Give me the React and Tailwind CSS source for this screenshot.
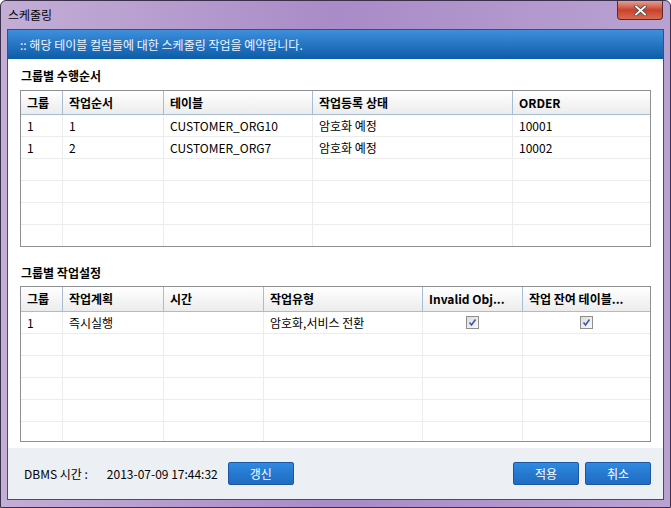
import { useState } from 'react';

const font = { fontFamily: '"Noto Sans CJK KR", "Noto Sans", sans-serif' };

const orderCols = ['w-[42px]', 'w-[101px]', 'w-[149px]', 'w-[200px]', 'flex-1'];
const orderHead = ['그룹', '작업순서', '테이블', '작업등록 상태', 'ORDER'];
const orderRows = [
    ['1', '1', 'CUSTOMER_ORG10', '암호화 예정', '10001'],
    ['1', '2', 'CUSTOMER_ORG7', '암호화 예정', '10002'],
];

const jobCols = ['w-[42px]', 'w-[101px]', 'w-[100px]', 'w-[159px]', 'w-[100px]', 'flex-1'];
const jobHead = ['그룹', '작업계획', '시간', '작업유형', 'Invalid Obj...', '작업 잔여 테이블...'];

function Check({ checked }) {
    return (
        <span className="flex h-[13px] w-[13px] items-center justify-center border border-[#8f8f8f] bg-gradient-to-br from-[#dcdcdc] to-[#fafafa]">
            {checked && (
                <svg width="9" height="9" viewBox="0 0 9 9">
                    <path d="M1.5 4.5 L3.5 7 L7.5 1.5" fill="none" stroke="#3b58a8" strokeWidth="1.6" />
                </svg>
            )}
        </span>
    );
}

function Grid({ cols, head, rows, height, headH }) {
    const empty = 6 - rows.length;
    return (
        <div className={`mx-[12px] ${height} overflow-hidden border border-[#8c8f94] bg-white`}>
            <div className={`flex ${headH} border-b border-[#a6bdd4] bg-gradient-to-b from-white to-[#ececec] text-[12px] font-bold text-black`}>
                {head.map((h, i) => (
                    <div key={i} className={`${cols[i]} flex items-center truncate px-[6px] ${i < head.length - 1 ? 'border-r border-[#a6bdd4]' : ''}`}>{h}</div>
                ))}
            </div>
            {rows.map((r, ri) => (
                <div key={ri} className="flex h-[22px] border-b border-[#ececec] text-[12px] text-black">
                    {r.map((c, i) => (
                        <div key={i} className={`${cols[i]} flex items-center px-[6px] ${i < r.length - 1 ? 'border-r border-[#ececec]' : ''} ${typeof c !== 'string' ? 'justify-center' : ''}`}>{c}</div>
                    ))}
                </div>
            ))}
            {Array.from({ length: empty }).map((_, ri) => (
                <div key={'e' + ri} className="flex h-[22px] border-b border-[#ececec]">
                    {cols.map((w, i) => (
                        <div key={i} className={`${w} ${i < cols.length - 1 ? 'border-r border-[#ececec]' : ''}`} />
                    ))}
                </div>
            ))}
        </div>
    );
}

function BlueButton({ children }) {
    return (
        <button className="h-[23px] w-[66px] rounded-[2px] border border-[#1c56a0] bg-gradient-to-b from-[#2f8ae2] via-[#2679d0] to-[#1f6cc0] text-[12px] text-white">
            {children}
        </button>
    );
}

export default function App() {
    const [time] = useState('2013-07-09 17:44:32');
    return (
        <div style={font} className="flex h-[508px] w-[671px] flex-col rounded-t-[6px] border border-[#3c2f4c] bg-gradient-to-r from-[#c3aed6] via-[#a98bc7] to-[#b9a2d2] px-[6px] pb-[7px]">
            {/* title bar */}
            <div className="flex h-[28px] items-start justify-between">
                <span className="pl-[1px] pt-[5px] text-[12px] text-black">스케줄링</span>
                <div className="mr-[1px] flex h-[19px] w-[46px] items-center justify-center rounded-b-[4px] border border-t-0 border-[#5a2a2a] bg-gradient-to-b from-[#e0a090] via-[#c8402c] to-[#d86a50]">
                    <svg width="13" height="11" viewBox="0 0 13 11">
                        <path d="M2 1.5 L11 9.5 M11 1.5 L2 9.5" stroke="#4a4a4a" strokeWidth="3.4" strokeLinecap="square" />
                        <path d="M2 1.5 L11 9.5 M11 1.5 L2 9.5" stroke="#ffffff" strokeWidth="1.8" strokeLinecap="square" />
                    </svg>
                </div>
            </div>

            {/* client area */}
            <div className="flex flex-1 flex-col border border-[#4d4a5a] bg-white">
                <div className="flex h-[29px] items-center bg-gradient-to-b from-[#3d8fdc] to-[#0b5ca8] pl-[12px] text-[12px] text-[#eef4ff]">
                    :: 해당 테이블 컬럼들에 대한 스케줄링 작업을 예약합니다.
                </div>

                <div className="mt-[8px] flex h-[18px] items-center pl-[13px] text-[12px] font-bold text-black">그룹별 수행순서</div>
                <div className="mt-[5px]">
                    <Grid cols={orderCols} head={orderHead} rows={orderRows} height="h-[157px]" headH="h-[24px]" />
                </div>

                <div className="mt-[17px] flex h-[18px] items-center pl-[13px] text-[12px] font-bold text-black">그룹별 작업설정</div>
                <div className="mt-[4px]">
                    <Grid
                        cols={jobCols}
                        head={jobHead}
                        rows={[['1', '즉시실행', '', '암호화,서비스 전환', <Check checked />, <Check checked />]]}
                        height="h-[156px]"
                        headH="h-[25px]"
                    />
                </div>

                <div className="mt-auto flex h-[51px] items-center bg-[#eceff3] pl-[16px] pr-[12px] text-[12px] text-black">
                    <span>DBMS 시간 :</span>
                    <span className="ml-[19px]">{time}</span>
                    <div className="ml-[10px]">
                        <BlueButton>갱신</BlueButton>
                    </div>
                    <div className="ml-auto flex gap-[6px]">
                        <BlueButton>적용</BlueButton>
                        <BlueButton>취소</BlueButton>
                    </div>
                </div>
            </div>
        </div>
    );
}
